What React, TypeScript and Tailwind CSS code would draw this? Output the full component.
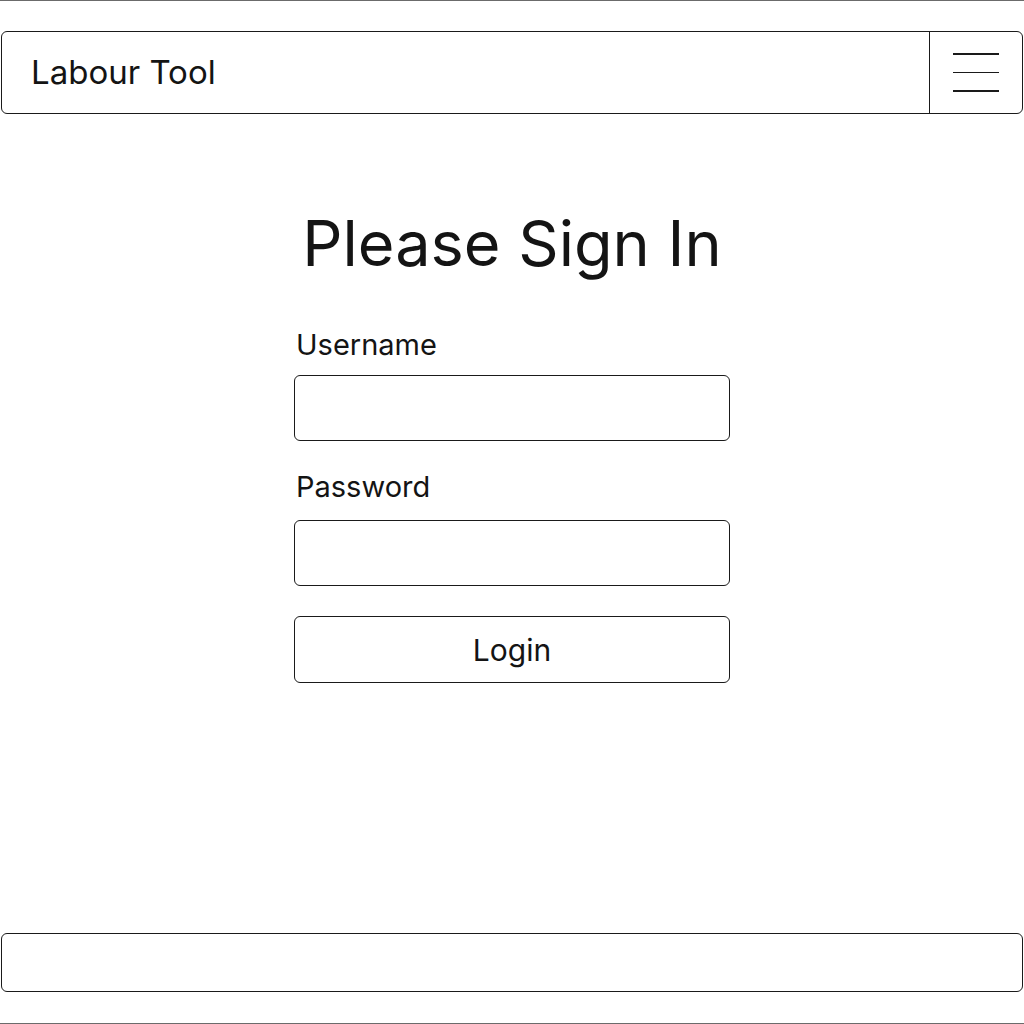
import { useState } from 'react';

// Simple wireframe-style sign-in page
export default function App() {
  const [username, setUsername] = useState('');
  const [password, setPassword] = useState('');

  return (
    <div
      className="w-[1024px] h-[1024px] flex flex-col bg-white text-[#141414] border-t border-b border-[#6b6b6b]"
      style={{ fontFamily: 'Inter, "Noto Sans", sans-serif' }}
    >
      <header className="mt-[30px] mx-[1px] h-[83px] flex border-[1.5px] border-[#1a1a1a] rounded-[6px]">
        <div className="flex-1 flex items-center pl-[29px] text-[33px] leading-none">Labour Tool</div>
        <button className="w-[93px] border-l-[1.5px] border-[#1a1a1a] flex flex-col items-center justify-center gap-[17px]">
          <span className="block w-[46px] h-[1.5px] bg-[#1a1a1a]" />
          <span className="block w-[46px] h-[1.5px] bg-[#1a1a1a]" />
          <span className="block w-[46px] h-[1.5px] bg-[#1a1a1a]" />
        </button>
      </header>

      <main className="flex-1 flex flex-col items-center">
        <h1 className="mt-[98px] text-[63px] leading-none font-normal">Please Sign In</h1>
        <form className="w-[436px] flex flex-col mt-[55px]" onSubmit={e => e.preventDefault()}>
          <label className="pl-[2px] text-[29px] leading-none">Username</label>
          <input
            value={username}
            onChange={e => setUsername(e.target.value)}
            className="mt-[16px] h-[66px] border-[1.5px] border-[#1a1a1a] rounded-[6px] px-4 text-[24px] outline-none"
          />
          <label className="mt-[31px] pl-[2px] text-[29px] leading-none">Password</label>
          <input
            type="password"
            value={password}
            onChange={e => setPassword(e.target.value)}
            className="mt-[19px] h-[66px] border-[1.5px] border-[#1a1a1a] rounded-[6px] px-4 text-[24px] outline-none"
          />
          <button
            type="submit"
            className="mt-[30px] h-[67px] border-[1.5px] border-[#1a1a1a] rounded-[6px] text-[30px] leading-none"
          >
            Login
          </button>
        </form>
      </main>

      <footer className="mx-[1px] mb-[31px] h-[59px] border-[1.5px] border-[#1a1a1a] rounded-[6px]" />
    </div>
  );
}
